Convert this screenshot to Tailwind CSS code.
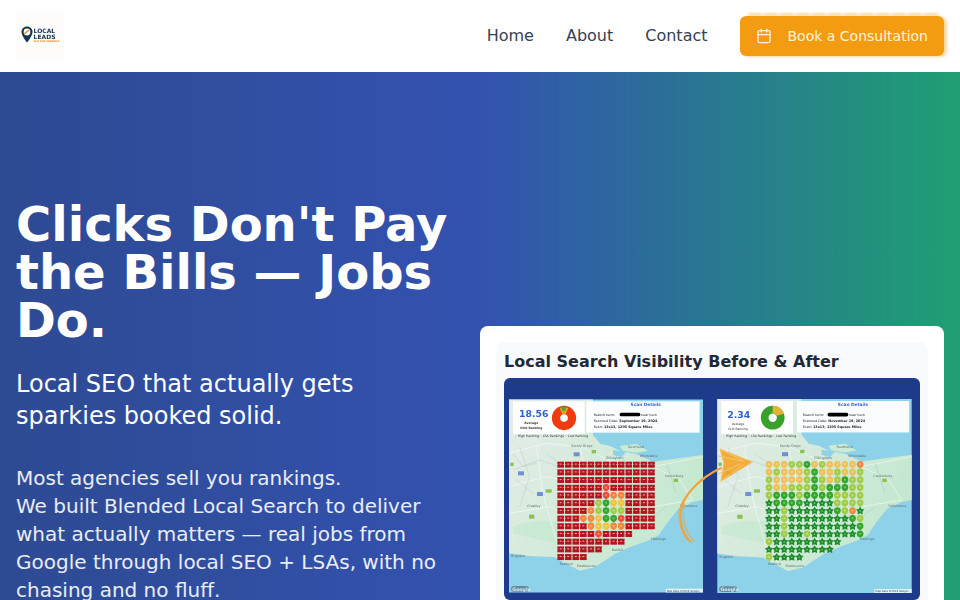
<!DOCTYPE html>
<html lang="en">
<head>
<meta charset="utf-8">
<title>Local Leads</title>
<script src="https://cdn.jsdelivr.net/npm/@tailwindcss/browser@4"></script>
</head>
<body class="m-0">
<div class="h-[600px] overflow-hidden bg-white font-['DejaVu_Sans',sans-serif]">

  <svg width="0" height="0" class="absolute">
    <defs>
      <linearGradient id="land" x1="0" y1="0" x2="1" y2="0.5">
        <stop offset="0" stop-color="#e6ecea"/><stop offset=".45" stop-color="#d6ebdc"/><stop offset="1" stop-color="#c4e8d0"/>
      </linearGradient>
      <symbol id="basemap" viewBox="88 238 582 580">
        <rect x="88" y="238" width="582" height="580" fill="#8dd2e8"/>
        <path d="M88 238H340V345L362 372L392 378L420 392L470 402L520 425L600 414L670 405V540L640 546L596 566L560 612L538 645L505 662L450 682L405 702L345 742L300 752L255 728L225 712L150 708L88 700Z" fill="url(#land)"/>
        <path d="M420 378L470 372L505 392L470 398L430 392Z" fill="#cdeAd6"/>
        <path d="M400 390L440 395L425 412L400 405Z" fill="#8dd2e8"/>
        <path d="M100 620C170 590 260 600 330 640C390 660 450 640 500 610C450 660 380 690 330 700C260 670 170 660 100 640Z" fill="#c4e8cf" opacity=".7"/>
        <path d="M88 400L200 370L300 380L390 420L520 440L670 410M170 380L190 520L240 700M88 500L200 470L360 500L520 560L640 540M300 380L340 540L400 690M390 420L450 520L530 640M88 580L210 560L330 620M520 440L600 480L640 540" fill="none" stroke="#fff" stroke-width="2" opacity=".75"/>
        <path d="M100 450L180 420L240 440M120 380L150 470L120 560M430 460L520 500M560 430L590 520M240 500L300 560L280 640M480 620L560 560M100 400L130 440L170 430M110 480L160 520M200 400L240 430" fill="none" stroke="#9fb0bc" stroke-width="1.2" opacity=".7"/>
        <g fill="#89c14f"><rect x="336" y="390" width="13" height="10"/><rect x="198" y="508" width="18" height="10"/><rect x="148" y="584" width="16" height="12"/><rect x="582" y="476" width="13" height="10"/><rect x="92" y="428" width="10" height="10"/></g>
        <g fill="#6f8fd6"><rect x="282" y="397" width="18" height="12"/><rect x="115" y="454" width="18" height="12"/><rect x="172" y="516" width="18" height="12"/></g>
        <g font-family="'DejaVu Sans',sans-serif" font-size="10" fill="#5b6b72">
          <text x="275" y="382">Sandy Grays</text><text x="445" y="385">Southend</text><text x="378" y="416">Gillingham</text><text x="480" y="412">Whitstable</text><text x="555" y="470">Canterbury</text><text x="142" y="560">Crawley</text><text x="600" y="560">Folkestone</text><text x="515" y="660">Hastings</text><text x="292" y="740">Eastbourne</text><text x="240" y="735">Seaford</text><text x="396" y="692">Bexhill</text><text x="94" y="712">Brighton</text>
        </g>
        <rect x="94" y="798" width="54" height="17" rx="8" fill="#5b7c8e" opacity=".8"/>
        <text x="98" y="812" font-family="'DejaVu Sans',sans-serif" font-size="14" font-weight="700" fill="#dfe8ee">Google</text>
        <rect x="558" y="806" width="112" height="12" fill="#fff" opacity=".7"/>
        <text x="561" y="815" font-family="'DejaVu Sans',sans-serif" font-size="8" fill="#444">Map data ©2024 Google</text>
      </symbol>
    </defs>
  </svg>

  <header class="h-[72px] flex items-center justify-between pl-4 pr-4 bg-white">
    <a class="w-12 h-12 flex items-center justify-center gap-[1px] bg-[#fefcfa] blur-[0.6px]">
      <svg class="w-[12px] h-[17px] -mt-1" viewBox="0 0 12 17">
        <path d="M6 0.5C2.8 0.5 0.5 2.9 0.5 6C0.5 10 6 16.5 6 16.5S11.5 10 11.5 6C11.5 2.9 9.2 0.5 6 0.5Z" fill="#17324f"/>
        <circle cx="6" cy="6" r="3.4" fill="#fff"/>
        <path d="M3.6 7.6L8 4" stroke="#f08a24" stroke-width="1.6"/>
      </svg>
      <div class="flex flex-col items-start leading-none -mt-[1px]">
        <span class="text-[6px] font-bold text-[#17324f] leading-[6px]">LOCAL</span>
        <span class="text-[6px] font-bold text-[#17324f] leading-[6px]">LEADS</span>
        <span class="text-[2.5px] text-[#f08a24] font-bold leading-[4px] tracking-tight">SEO FOR SPARKIES</span>
      </div>
    </a>
    <nav class="flex items-center">
      <a class="text-base text-[#374151] mr-8">Home</a>
      <a class="text-base text-[#374151] mr-8">About</a>
      <a class="text-base text-[#374151] mr-[32.5px]">Contact</a>
      <a class="relative h-10 w-[204px] flex items-center pl-4 rounded-md bg-[#f39c12] text-[#fff3dc] text-sm shadow-[3px_1px_3px_rgba(243,156,18,0.4)]">
        <span class="absolute left-[8px] right-[4px] -top-[3px] h-[3px] bg-[repeating-linear-gradient(90deg,rgba(243,156,18,0.35)_0_14px,rgba(243,156,18,0.08)_14px_16px)] blur-[1px]"></span>
        <svg class="w-4 h-4 mr-[15.5px]" viewBox="0 0 24 24" fill="none" stroke="currentColor" stroke-width="2" stroke-linecap="round" stroke-linejoin="round">
          <path d="M8 2v4"/><path d="M16 2v4"/><rect x="3" y="4" width="18" height="18" rx="2"/><path d="M3 10h18"/>
        </svg>
        Book a Consultation
      </a>
    </nav>
  </header>

  <section class="h-[528px] bg-[linear-gradient(90deg,#2e4a92_0%,#3352b0_50%,#1f9f72_100%)] grid grid-cols-[448px_464px] gap-4 px-4">
    <div class="pt-[128px] text-white">
      <h1 class="text-5xl leading-[48px] font-bold">Clicks Don't Pay the Bills — Jobs Do.</h1>
      <p class="mt-6 text-2xl leading-8">Local SEO that actually gets<br>sparkies booked solid.</p>
      <p class="mt-8 text-xl leading-7 text-white/90">Most agencies sell you rankings.<br>We built Blended Local Search to deliver what actually matters — real jobs from Google through local SEO + LSAs, with no chasing and no fluff.</p>
    </div>
    <div class="pt-[254px]">
      <div class="bg-white rounded-lg p-4 h-[400px]">
        <div class="bg-slate-50 rounded-lg p-2 h-full">
          <h2 class="text-base leading-6 font-bold text-[#1f2937] mb-1">Local Search Visibility Before &amp; After</h2>
          <div class="relative bg-[#1e3a8a] rounded-md pt-[21px] pb-[7px] pl-[5px] pr-2 flex gap-[14px]">
            <svg class="w-[194px] h-[194px] blur-[0.5px]" viewBox="88 238 582 580">
              <use href="#basemap" x="88" y="238" width="582" height="580"/>
              <g id="before-pins"></g>
              <rect x="100" y="244" width="215" height="98" fill="#fff" opacity=".95"/>
              <rect x="320" y="244" width="340" height="94" fill="#fff" opacity=".95"/>
              <g font-family="'DejaVu Sans',sans-serif">
                <text x="118" y="292" font-size="28" font-weight="700" fill="#2f5fd0">18.56</text>
                <text x="155" y="313" font-size="9" font-weight="700" text-anchor="middle" fill="#333">Average</text>
                <text x="155" y="328" font-size="9" font-weight="700" text-anchor="middle" fill="#333">Grid Ranking</text>
                <circle cx="253" cy="294" r="24" fill="none" stroke="#ef3b0e" stroke-width="25"/>
                <path d="M240 264A36 36 0 0 1 266 264L258 282A15 15 0 0 0 248 282Z" fill="#e3a92c"/>
                <path d="M246 260H258V272H246Z" fill="#4aa83a"/>
                <text x="498" y="257" font-size="13" font-weight="700" text-anchor="middle" fill="#3b66d8">Scan Details</text>
                <text x="342" y="287" font-size="10" fill="#222">Search term:</text>
                <rect x="420" y="278" width="62" height="11" rx="5" fill="#000"/>
                <text x="484" y="287" font-size="10" fill="#222">near kent</text>
                <text x="342" y="305" font-size="10" fill="#222">Scanned Date: <tspan font-weight="700">September 19, 2024</tspan></text>
                <text x="342" y="324" font-size="10" fill="#222">Scan: <tspan font-weight="700">13x13, 1205 Square Miles</tspan></text>
                <text x="106" y="350" font-size="9.5" fill="#333">◦ High Ranking ◦ LSA Rankings ◦ Low Ranking</text>
              </g>
            </svg>
            <svg class="w-[195px] h-[194px] blur-[0.5px]" viewBox="88 238 582 580">
              <use href="#basemap" x="88" y="238" width="582" height="580"/>
              <g id="after-pins"></g>
              <rect x="100" y="244" width="215" height="98" fill="#fff" opacity=".95"/>
              <rect x="326" y="244" width="336" height="94" fill="#fff" opacity=".95"/>
              <g font-family="'DejaVu Sans',sans-serif">
                <text x="118" y="295" font-size="28" font-weight="700" fill="#2f5fd0">2.34</text>
                <text x="150" y="315" font-size="9" text-anchor="middle" fill="#333">Average</text>
                <text x="150" y="330" font-size="9" text-anchor="middle" fill="#333">Grid Ranking</text>
                <circle cx="254" cy="294" r="24" fill="none" stroke="#3aa02c" stroke-width="23"/>
                <path d="M254 258A36 36 0 0 1 288 282L266 288A14 14 0 0 0 254 280Z" fill="#e3b33a"/>
                <text x="494" y="260" font-size="13" font-weight="700" text-anchor="middle" fill="#3b66d8">Scan Details</text>
                <text x="344" y="288" font-size="10" fill="#222">Search term:</text>
                <rect x="418" y="279" width="62" height="11" rx="5" fill="#000"/>
                <text x="482" y="288" font-size="10" fill="#222">near kent</text>
                <text x="344" y="306" font-size="10" fill="#222">Scanned Date: <tspan font-weight="700">November 19, 2024</tspan></text>
                <text x="344" y="325" font-size="10" fill="#222">Scan: <tspan font-weight="700">13x13, 1205 Square Miles</tspan></text>
                <text x="106" y="351" font-size="9.5" fill="#333">◦ High Ranking ◦ LSA Rankings ◦ Low Ranking</text>
              </g>
            </svg>
            <svg class="absolute left-[160px] top-[62px] w-[110px] h-[120px] blur-[0.4px]" viewBox="660 440 110 120" fill="none" stroke="#f2a43a" stroke-linecap="round">
              <path d="M717 468C696 478 680 494 677 510C675 524 680 536 687 542" stroke-width="2"/>
              <path d="M700 479C686 490 676 500 675 514C675 526 679 534 683 540" stroke-width="1.2" opacity=".8"/>
              <path d="M680 504C678 516 680 530 690 541" stroke-width="1.2" opacity=".7"/>
              <path d="M748 462L716 449L720 463L717 481Z" fill="#f4a62a" stroke="#f7b64e" stroke-width=".8" opacity=".92"/>
              <path d="M716 449L740 461M717 481L740 464M714 456L738 461M714 474L736 464" stroke="#f9c46b" stroke-width="1"/>
            </svg>
          </div>
        </div>
      </div>
    </div>
  </section>
</div>

<script>
  var NS = 'http://www.w3.org/2000/svg';
  function add(parent, tag, attrs) {
    var el = document.createElementNS(NS, tag);
    for (var k in attrs) el.setAttribute(k, attrs[k]);
    parent.appendChild(el);
  }
  var colours = { R:'#e8503a', O:'#ef8a3c', Y:'#f2c23e', A:'#f0c05a', L:'#a4cc4a', G:'#35a52e', S:'#1f8a2a' };
  function star(cx, cy, r) {
    var p = [];
    for (var i = 0; i < 10; i++) {
      var a = -Math.PI / 2 + i * Math.PI / 5, q = i % 2 ? r * 0.55 : r;
      p.push((cx + q * Math.cos(a)).toFixed(1) + ',' + (cy + q * Math.sin(a)).toFixed(1));
    }
    return p.join(' ');
  }
  function draw(id, rows, x0, y0) {
    var g = document.getElementById(id);
    rows.forEach(function (row, j) {
      row.split('').forEach(function (c, i) {
        var x = x0 + i * 22.7, y = y0 + j * 23.1;
        if (c === '.') return;
        if (c === 'D') {
          add(g, 'rect', { x: x - 10, y: y - 9, width: 20, height: 18, fill: '#b5141f' });
          add(g, 'rect', { x: x - 3, y: y - 3, width: 6, height: 3, fill: '#e9a9a6' });
          add(g, 'rect', { x: x - 10, y: y - 2, width: 2, height: 2, fill: '#f6dfda' });
          add(g, 'rect', { x: x + 8, y: y - 2, width: 2, height: 2, fill: '#f6dfda' });
        } else if (c === 'S') {
          add(g, 'polygon', { points: star(x, y, 13), fill: colours.S });
          add(g, 'circle', { cx: x, cy: y, r: 2.5, fill: '#6fc07e' });
        } else {
          add(g, 'circle', { cx: x, cy: y - 1, r: 10, fill: colours[c] });
          add(g, 'path', { d: 'M' + (x - 7) + ' ' + (y + 5) + 'L' + x + ' ' + (y + 12) + 'L' + (x + 7) + ' ' + (y + 5) + 'Z', fill: colours[c] });
          add(g, 'circle', { cx: x, cy: y - 1, r: 3, fill: '#fff', opacity: .35 });
        }
      });
    });
  }
  draw('before-pins', [
    'DDDDDDDDDDDDD',
    'DDDDDDDDDDDDD',
    'DDDDDDDDDDDDD',
    'DDDDDDRDDDDDD',
    'DDDDDDROODDDD',
    'DDDDDLGYYDDDD',
    'DDDDOLGLLDDDD',
    'DDDOOYGGRDDDD',
    'DDDDOYYOODDDD',
    'DDDDDRDDDD...',
    'DDDDDDDDD....',
    'DDDDDD.......',
    'DDDD.........'
  ], 243, 434);
  draw('after-pins', [
    'AAALLGALAAAAO',
    'ALAAALGAALAAL',
    'LAAAALGLALGLL',
    'LAALLLGLGGGLL',
    'LGGGLGGGGLLLL',
    'SGGGGSSSSLLLL',
    'SSLSSSSSSGLOS',
    'SSLSSSSSSSSGL',
    'SSLSSSSSSSSSG',
    'SSLSSLSSSSSSG',
    'LSSSSSSSSS...',
    'SSSSSSSSS....',
    'LSSSS........'
  ], 243, 434);
</script>
</body>
</html>
